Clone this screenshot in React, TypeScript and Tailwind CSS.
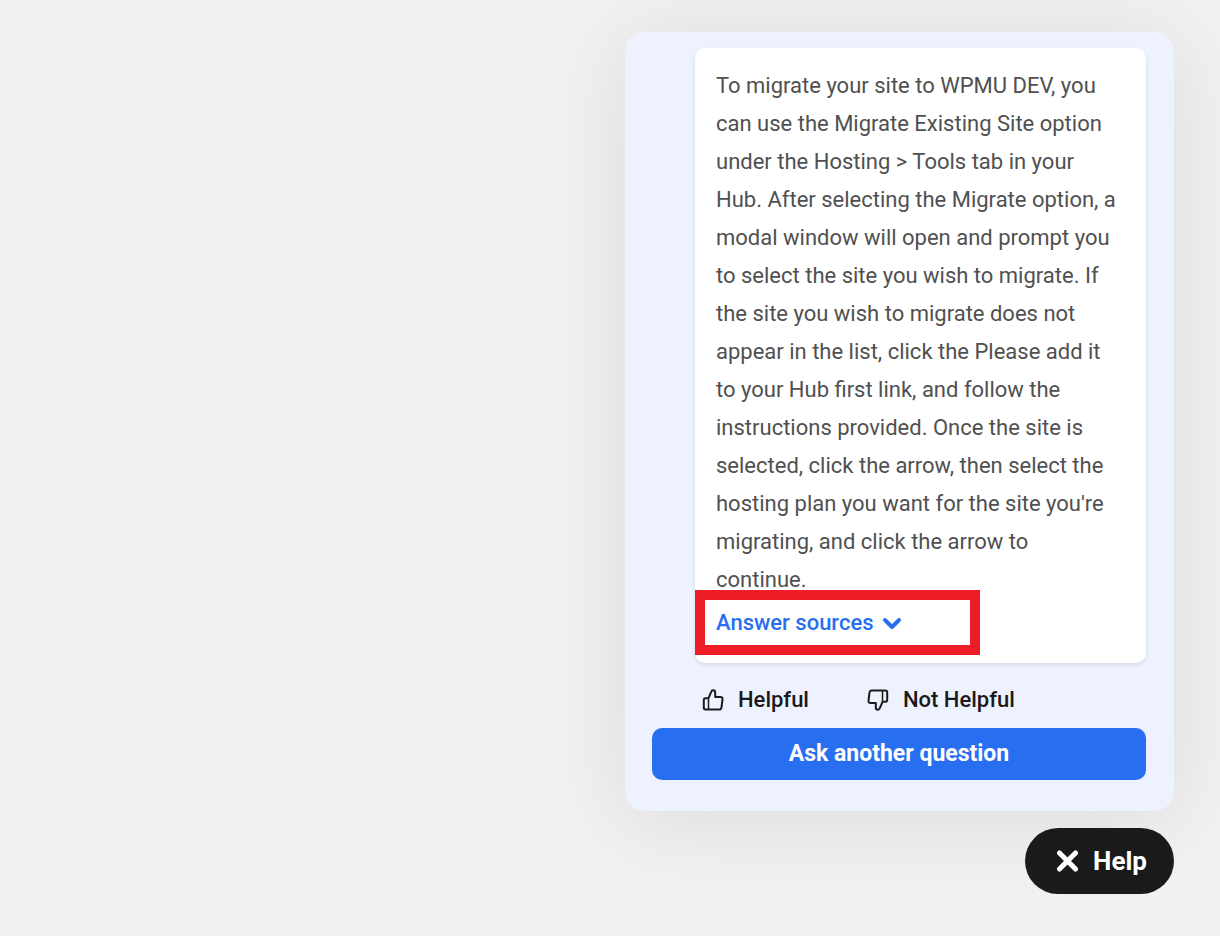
import { useState } from "react";

const ANSWER =
  "To migrate your site to WPMU DEV, you can use the Migrate Existing Site option under the Hosting > Tools tab in your Hub. After selecting the Migrate option, a modal window will open and prompt you to select the site you wish to migrate. If the site you wish to migrate does not appear in the list, click the Please add it to your Hub first link, and follow the instructions provided. Once the site is selected, click the arrow, then select the hosting plan you want for the site you're migrating, and click the arrow to continue.";

function ThumbIcon({ down = false }: { down?: boolean }) {
  return (
    <svg
      width="22"
      height="22"
      viewBox="0 0 22 22"
      fill="none"
      stroke="currentColor"
      strokeWidth="2"
      strokeLinejoin="round"
      className={down ? "rotate-180" : ""}
      aria-hidden="true"
    >
      <path d="M6.500 9.200H3.600c-1.100 0-1.800.7-1.800 1.800v7.800c0 1.100.7 1.700 1.800 1.700h2.900" />
      <path d="M6.500 9.200v11.300" strokeWidth="1.500" />
      <path d="M6.500 9.200 9.200 2.800C9.600 1.700 10.100 1.300 11 1.300c1.300 0 2.200.9 2.200 2.200v4.500h5.300c1.400 0 2.200 1 2 2.300l-1 8c-.2 1.400-1 2.200-2.300 2.200H6.500" />
    </svg>
  );
}

export default function App() {
  const [vote, setVote] = useState<"up" | "down" | null>(null);
  const [open, setOpen] = useState(false);

  return (
    <main className="min-h-screen bg-[#f1f1f1] flex flex-col items-end pt-8 pr-[46px] pb-10 gap-[17px] font-['Roboto',sans-serif] text-[22px]">
      <section className="w-full max-w-[549px] rounded-[20px] bg-[#eef2ff] pt-4 pr-7 pb-[31px] pl-[27px] shadow-[0_8px_90px_rgba(0,0,0,0.09)]">
        {/* Answer */}
        <div className="ml-[43px] rounded-[10px] bg-white pb-2 shadow-[0_2px_4px_rgba(0,0,0,0.1)]">
          <p className="pl-[21px] pr-6 pt-[19px] leading-[38px] text-[#505050]">{ANSWER}</p>
          <div className="-mt-[9px] w-[285px] border-[10px] border-[#ee1c25] px-[11px]">
            <button
              type="button"
              aria-expanded={open}
              onClick={() => setOpen(!open)}
              className="flex h-[45px] items-center gap-2 font-medium text-[#286ef1]"
            >
              Answer sources
              <svg width="20" height="14" viewBox="0 0 20 14" fill="none" stroke="currentColor" strokeWidth="4" strokeLinecap="round" strokeLinejoin="round" aria-hidden="true">
                <path d="M3 4l7 7 7-7" />
              </svg>
            </button>
          </div>
        </div>

        {/* Feedback */}
        <div className="ml-[50px] flex h-[65px] items-center gap-[58px] pt-2 font-medium text-[#1a1a1a]">
          <button type="button" aria-pressed={vote === "up"} onClick={() => setVote("up")} className="flex items-center gap-[14px]">
            <ThumbIcon />
            Helpful
          </button>
          <button type="button" aria-pressed={vote === "down"} onClick={() => setVote("down")} className="flex items-center gap-[14px]">
            <ThumbIcon down />
            Not Helpful
          </button>
        </div>

        <button type="button" className="h-[52px] w-full rounded-[10px] bg-[#286ef1] text-[23px] font-bold text-white">
          Ask another question
        </button>
      </section>

      <button type="button" className="flex h-[66px] items-center gap-[14px] rounded-full bg-[#1a1a1a] pr-[27px] pl-8 text-[26px] font-bold text-white">
        <svg width="22" height="22" viewBox="0 0 22 22" fill="none" stroke="currentColor" strokeWidth="5" strokeLinecap="round" aria-hidden="true">
          <path d="M2.500 3l16 16M18.500 3l-16 16" />
        </svg>
        Help
      </button>
    </main>
  );
}
